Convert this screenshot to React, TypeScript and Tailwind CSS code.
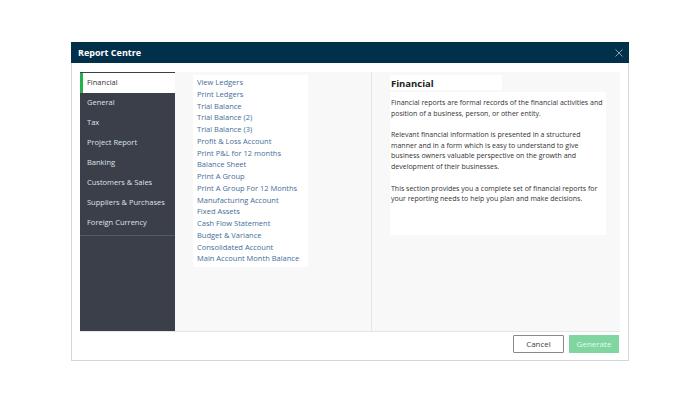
import React from "react";

const cats = [
  "Financial",
  "General",
  "Tax",
  "Project Report",
  "Banking",
  "Customers & Sales",
  "Suppliers & Purchases",
  "Foreign Currency",
];

const reports = [
  "View Ledgers",
  "Print Ledgers",
  "Trial Balance",
  "Trial Balance (2)",
  "Trial Balance (3)",
  "Profit & Loss Account",
  "Print P&L for 12 months",
  "Balance Sheet",
  "Print A Group",
  "Print A Group For 12 Months",
  "Manufacturing Account",
  "Fixed Assets",
  "Cash Flow Statement",
  "Budget & Variance",
  "Consolidated Account",
  "Main Account Month Balance",
];

export default function App() {
  return (
    <div
      className="w-[700px] h-[420px] bg-white pt-[42px] pl-[71px]"
      style={{ fontFamily: '"Open Sans", "Liberation Sans", sans-serif' }}
    >
      <div className="w-[558px] h-[319px] flex flex-col border border-[#d6d6d6] bg-white">
        <div className="h-[21px] bg-[#01304a] flex items-center justify-between pl-[7px] pr-[5px] -mx-px -mt-px">
          <span className="text-white font-bold text-[9px]">Report Centre</span>
          <svg width="10" height="10" viewBox="0 0 10 10" className="text-[#8aa0ad]">
            <path d="M1.5 1.5 L8.5 8.5 M8.5 1.5 L1.5 8.5" stroke="currentColor" strokeWidth="1" />
          </svg>
        </div>
        <div className="mt-[9px] mx-[8px] h-[260px] flex border-b border-[#e4e4e4]">
          <div className="w-[95px] bg-[#3a3f4a] flex flex-col pt-px">
            {cats.map((c, i) => (
              <div
                key={c}
                className={
                  i === 0
                    ? "h-[20px] bg-white border-l-[3px] border-[#22b14c] pl-[4px] flex items-center text-[7.5px] text-[#333]"
                    : "h-[20px] pl-[7px] flex items-center text-[7.5px] text-[#dfe2e6]"
                }
              >
                {c}
              </div>
            ))}
            <div className="mt-[2px] border-t border-[#555b66]" />
          </div>
          <div className="w-[197px] bg-[#f8f8f8] border-r border-[#e6e6e6] pt-[3px] pl-[18px]">
            <div className="w-[115px] bg-white pt-[2px] pb-[2px] pl-[4px] flex flex-col">
              {reports.map((r) => (
                <div key={r} className="h-[11.75px] leading-[11.75px] text-[7.5px] text-[#456e98] whitespace-nowrap">
                  {r}
                </div>
              ))}
            </div>
          </div>
          <div className="flex-1 bg-[#f8f8f8] pt-[3px] pl-[18px] pr-[14px] flex flex-col">
            <div className="w-[112px] h-[15px] bg-white text-[9.5px] font-bold text-[#222] pl-[1px] pt-px leading-[15px]">
              Financial
            </div>
            <div className="mt-[2px] h-[143px] bg-white text-[7px] leading-[10.6px] text-[#333] pt-[6px] pl-[1px]">
              <p>Financial reports are formal records of the financial activities and position of a business, person, or other entity.</p>
              <p className="mt-[11px]">
                Relevant financial information is presented in a structured manner and in a form which is easy to understand to give business owners valuable perspective on the growth and development of their businesses.
              </p>
              <p className="mt-[11px]">
                This section provides you a complete set of financial reports for your reporting needs to help you plan and make decisions.
              </p>
            </div>
          </div>
        </div>
        <div className="flex justify-end gap-[5px] pr-[9px] mt-[3px]">
          <button className="w-[51px] h-[18px] border border-[#8a8a8a] rounded-[1px] bg-white text-[8px] text-[#444]">Cancel</button>
          <button className="w-[50px] h-[18px] bg-[#7fd6a1] text-[8px] text-[#e8f8ee]">Generate</button>
        </div>
      </div>
    </div>
  );
}
